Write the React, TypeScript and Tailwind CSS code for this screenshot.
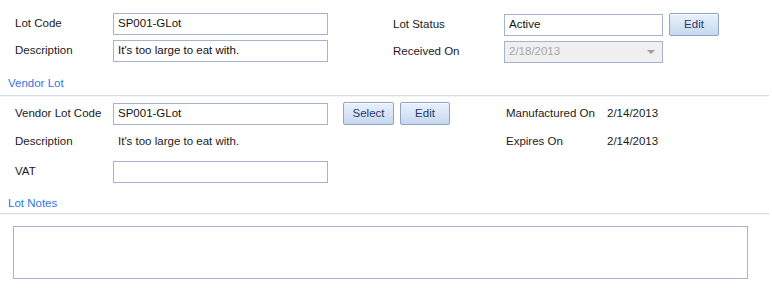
import React from "react";

const font = { fontFamily: '"Liberation Sans", Arial, sans-serif' };

function TextBox({ value, className = "" }: { value?: string; className?: string }) {
  return (
    <div
      className={`flex h-[22px] items-center border border-[#a3b4cc] bg-white px-[4px] text-[11.5px] text-[#111] ${className}`}
    >
      {value}
    </div>
  );
}

function Button({ label, className = "" }: { label: string; className?: string }) {
  return (
    <button
      className={`flex h-[23px] items-center justify-center rounded-[2px] border border-[#8da5c8] bg-gradient-to-b from-[#e9f0fa] via-[#d9e5f5] to-[#c6d7ee] text-[11.5px] text-[#1c3a6b] shadow-[inset_0_1px_0_#f7faff] ${className}`}
    >
      {label}
    </button>
  );
}

function Section({ title }: { title: string }) {
  return (
    <div className="pl-[8px]">
      <div className="text-[11.5px] leading-[14px] text-[#2f77dc]">{title}</div>
    </div>
  );
}

export default function App() {
  return (
    <div className="h-[297px] w-[772px] bg-white text-[11.5px] text-[#1b1b1b]" style={font}>
      {/* Lot header fields */}
      <div className="flex pt-[13px]">
        <div className="flex w-[393px] flex-col gap-[5px] pl-[15px]">
          <div className="flex items-center">
            <span className="w-[98px]">Lot Code</span>
            <TextBox value="SP001-GLot" className="w-[215px]" />
          </div>
          <div className="flex items-center">
            <span className="w-[98px]">Description</span>
            <TextBox value="It's too large to eat with." className="w-[215px]" />
          </div>
        </div>
        <div className="flex flex-col gap-[5px]">
          <div className="flex items-center">
            <span className="w-[111px]">Lot Status</span>
            <TextBox value="Active" className="w-[159px]" />
            <Button label="Edit" className="ml-[6px] h-[22px] w-[50px]" />
          </div>
          <div className="flex items-center">
            <span className="w-[111px]">Received On</span>
            <div className="flex h-[22px] w-[159px] items-center justify-between border border-[#a3b4cc] bg-[#efefef] pl-[4px] pr-[7px] text-[#a8a8a8]">
              <span>2/18/2013</span>
              <span className="h-0 w-0 border-x-[4px] border-t-[4px] border-x-transparent border-t-[#a0a0a0]" />
            </div>
          </div>
        </div>
      </div>

      {/* Vendor Lot */}
      <div className="mt-[13px]">
        <Section title="Vendor Lot" />
        <div className="mr-[3px] mt-[5px] h-[2px] border-t border-[#d7dce3] bg-[#f3f5f8]" />
      </div>

      <div className="flex pt-[5px]">
        <div className="flex w-[506px] flex-col pl-[15px]">
          <div className="flex h-[23px] items-center">
            <span className="w-[98px]">Vendor Lot Code</span>
            <TextBox value="SP001-GLot" className="w-[215px]" />
            <Button label="Select" className="ml-[15px] w-[51px]" />
            <Button label="Edit" className="ml-[6px] w-[50px]" />
          </div>
          <div className="mt-[5px] flex h-[23px] items-center">
            <span className="w-[98px]">Description</span>
            <span className="pl-[5px]">It's too large to eat with.</span>
          </div>
          <div className="mt-[7px] flex h-[23px] items-center">
            <span className="w-[98px]">VAT</span>
            <TextBox className="w-[215px]" />
          </div>
        </div>
        <div className="flex flex-col">
          <div className="flex h-[23px] items-center">
            <span className="w-[101px]">Manufactured On</span>
            <span>2/14/2013</span>
          </div>
          <div className="mt-[5px] flex h-[23px] items-center">
            <span className="w-[101px]">Expires On</span>
            <span>2/14/2013</span>
          </div>
        </div>
      </div>

      {/* Lot Notes */}
      <div className="mt-[13px]">
        <Section title="Lot Notes" />
        <div className="mr-[3px] mt-[3px] h-[2px] border-t border-[#d7dce3] bg-[#f3f5f8]" />
      </div>
      <div className="pl-[13px] pt-[11px]">
        <textarea
          className="block h-[53px] w-[735px] resize-none border border-[#a3b4cc] bg-white outline-none"
          readOnly
        />
      </div>
    </div>
  );
}
